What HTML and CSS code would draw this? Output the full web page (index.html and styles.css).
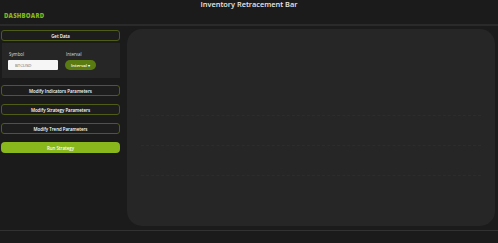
FILE: index.html
```html
<!DOCTYPE html>
<html lang="en">

<head>
  <meta charset="UTF-8">
  <meta name="viewport" content="width=device-width, initial-scale=1.0">
  <title>Inventory Retracement Bar</title>
  <link rel="stylesheet" href="styles.css">
</head>

<body>
  <div class="header">
    <h1 class="title">Inventory Retracement Bar</h1>
    <div class="brand">DASHBOARD</div>
  </div>

  <div class="main">
    <div class="sidebar">
      <button class="btn-outline">Get Data</button>
      <div class="data-panel">
        <div class="field">
          <label for="symbol">Symbol</label>
          <input type="text" id="symbol" value="BTCUSD">
        </div>
        <div class="field">
          <label>Interval</label>
          <button class="btn-dropdown">Interval <span class="caret">&#9662;</span></button>
        </div>
      </div>
      <button class="btn-outline">Modify Indicators Parameters</button>
      <button class="btn-outline">Modify Strategy Parameters</button>
      <button class="btn-outline">Modify Trend Parameters</button>
      <button class="btn-run">Run Strategy</button>
    </div>

    <div class="chart">
      <div class="grid-line"></div>
      <div class="grid-line"></div>
      <div class="grid-line"></div>
    </div>
  </div>

  <div class="footer"></div>
</body>

</html>
```

FILE: styles.css
```css
body {
  font-family: 'Open Sans', 'Liberation Sans', sans-serif;
  background-color: #1b1b1b;
  color: #fff;
  margin: 0;
  padding: 0;
  height: 243px;
  overflow: hidden;
}

.header {
  height: 24px;
  border-bottom: 2px solid #2a2a2a;
}

.title {
  margin: 0;
  font-size: 7.4px;
  font-weight: 600;
  line-height: 8px;
  text-align: center;
  color: #e8e8e8;
}

.brand {
  margin: 4px 0 0 4px;
  font-size: 6px;
  font-weight: 800;
  letter-spacing: 0.2px;
  color: #84b51a;
}

.main {
  display: flex;
  padding: 3px 3px 0 1px;
  gap: 7px;
}

.sidebar {
  width: 119px;
  display: flex;
  flex-direction: column;
  gap: 8px;
  padding-top: 1px;
}

button {
  font-family: inherit;
  color: #fff;
  cursor: pointer;
}

.btn-outline {
  height: 11px;
  padding: 0;
  background-color: #1d1d1d;
  border: 1px solid #4d5c17;
  border-radius: 3px;
  font-size: 4.4px;
  font-weight: 600;
}

.data-panel {
  margin: -6px 0 -1px 1px;
  height: 35px;
  background-color: #262626;
  display: flex;
  gap: 7px;
  padding: 0 6px 8px 6px;
  box-sizing: border-box;
  align-items: flex-end;
}

.field {
  display: flex;
  flex-direction: column;
  gap: 3px;
}

.field label {
  font-size: 4.4px;
  color: #ddd;
  line-height: 5px;
  padding-left: 1px;
}

.field input {
  width: 50px;
  height: 10px;
  box-sizing: border-box;
  border: none;
  border-radius: 1px;
  background-color: #f6f6f6;
  color: #666;
  font-family: inherit;
  font-size: 4.3px;
  padding: 0 0 0 7px;
  margin: 0;
}

.btn-dropdown {
  width: 31px;
  height: 10px;
  padding: 0;
  border: none;
  border-radius: 5px;
  background-color: #5a7b12;
  font-size: 4.3px;
  font-weight: 600;
}

.caret {
  font-size: 3.5px;
}

.btn-run {
  height: 11px;
  padding: 0;
  border: none;
  border-radius: 4px;
  background-color: #89b81c;
  font-size: 4.4px;
  font-weight: 600;
}

.chart {
  flex: 1;
  height: 197px;
  background-color: #262626;
  border-radius: 15px;
  display: flex;
  flex-direction: column;
  justify-content: flex-end;
  gap: 29px;
  padding-bottom: 50px;
  box-sizing: border-box;
}

.grid-line {
  height: 0;
  border-top: 1px dashed #2c2c2c;
  margin: 0 14px;
}

.footer {
  margin-top: 4px;
  height: 1px;
  background-color: #323232;
}
```
